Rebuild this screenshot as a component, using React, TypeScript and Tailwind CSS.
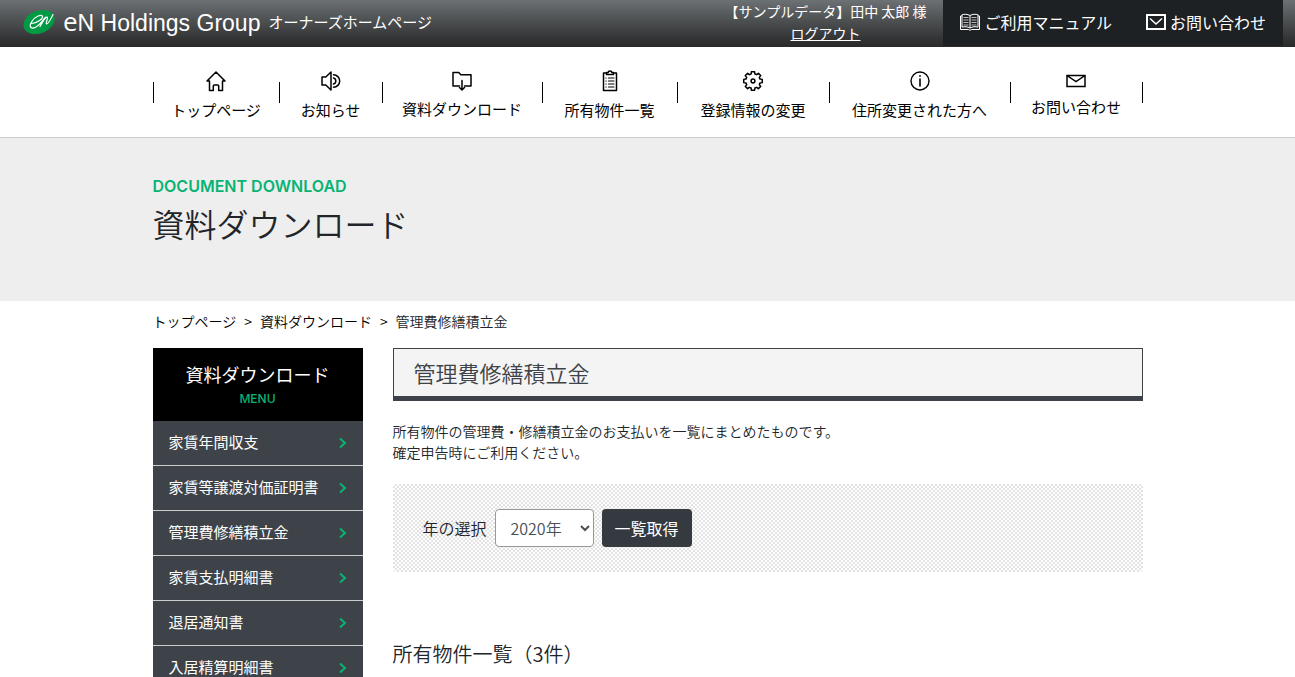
import type { ReactNode } from 'react';

type NavItem = { label: string; icon: ReactNode };

const stroke = {
  fill: 'none',
  stroke: 'currentColor',
  strokeWidth: 1.5,
  strokeLinejoin: 'round',
  strokeLinecap: 'round',
} as const;

function HomeIcon() {
  return (
    <svg width="20" height="22" viewBox="0 0 20 22" {...stroke} aria-hidden="true">
      <path d="M1 11 10 2l9 9h-2.500v9.500h-3.800V16a1 1 0 0 0-1-1H8.300a1 1 0 0 0-1 1v4.500H3.500V11z" />
    </svg>
  );
}

function SpeakerIcon() {
  return (
    <svg width="20" height="22" viewBox="0 0 20 22" {...stroke} aria-hidden="true">
      <path d="M1 7h3.800L10 2v18l-5.200-5H1z" />
      <path d="M12.500 8a3.100 3.100 0 0 1 0 6M12.500 4.800a6.200 6.200 0 0 1 0 12.400" />
    </svg>
  );
}

function FolderIcon() {
  return (
    <svg width="20" height="20" viewBox="0 0 20 20" {...stroke} aria-hidden="true">
      <path d="M7.500 15H1V1.500h5.800l2 2.200H19V15h-6.500" />
      <path d="M10 9.500v9M7.500 16.500l2.500 2.500 2.500-2.500" />
    </svg>
  );
}

function ClipboardIcon() {
  return (
    <svg width="16" height="22" viewBox="0 0 16 22" {...stroke} aria-hidden="true">
      <path d="M4.500 3H1.500v17.500h13V3h-3" />
      <path d="M4.500 4.500V2.500h1.700a1.800 1.500 0 0 1 3.600 0h1.700v2z" />
      <path d="M6.500 8h5.500M6.500 11h5.500M6.500 14h5.500M6.500 17h5.500M3.900 8h.3M3.900 11h.3M3.900 14h.3M3.900 17h.3" strokeWidth="1.200" />
    </svg>
  );
}

// eight teeth, four corners each: [degrees from tooth centre, radius]
const toothCorners = [
  [-15, 7.3],
  [-10, 9.4],
  [10, 9.4],
  [15, 7.3],
];

const gearPoints = Array.from({ length: 8 }, (_, i) =>
  toothCorners.map(([deg, r]) => {
    const a = ((i * 45 + deg) * Math.PI) / 180;
    return `${(10 + r * Math.sin(a)).toFixed(2)},${(11 - r * Math.cos(a)).toFixed(2)}`;
  }).join(' '),
).join(' ');

function GearIcon() {
  return (
    <svg width="20" height="22" viewBox="0 0 20 22" {...stroke} aria-hidden="true">
      <polygon points={gearPoints} />
      <circle cx="10" cy="11" r="1.900" />
    </svg>
  );
}

function InfoIcon() {
  return (
    <svg width="20" height="22" viewBox="0 0 20 22" {...stroke} strokeWidth="1.400" aria-hidden="true">
      <circle cx="10" cy="11" r="9" />
      <path d="M10 9v7M10 5.800v.4" strokeWidth="1.600" />
    </svg>
  );
}

function MailIcon() {
  return (
    <svg width="20" height="16" viewBox="0 0 20 16" {...stroke} strokeLinejoin="miter" aria-hidden="true">
      <path d="M1 2.500h18v11H1zM1 2.500l9 6 9-6" />
    </svg>
  );
}

function BookIcon() {
  return (
    <svg width="20" height="18" viewBox="0 0 20 18" fill="none" stroke="currentColor" strokeWidth="1" aria-hidden="true">
      <path d="M10 2.500C7.500 1 4 1 2 1.800v12.400c2.500-.8 5.500-.6 8 .8 2.500-1.400 5.500-1.600 8-.8V1.800C16 1 12.500 1 10 2.500zM10 2.500V15" />
      <path d="M2 3H.5v13.500h8l1.500.8 1.500-.8h8V3H18" />
      <path d="M3.500 4.500h5M3.500 7h5M3.500 9.500h5M3.500 12h5M11.500 4.500h5M11.500 7h5M11.500 9.500h5M11.500 12h5" strokeOpacity=".7" />
    </svg>
  );
}

function ContactIcon() {
  return (
    <svg width="20" height="16" viewBox="0 0 20 16" fill="none" stroke="currentColor" strokeWidth="2" aria-hidden="true">
      <path d="M1 1h18v14H1z" />
      <path d="M4 4.500 10 10l6-5.500" strokeWidth="1.500" />
    </svg>
  );
}

function Chevron() {
  return (
    <svg width="8" height="12" viewBox="0 0 8 12" fill="none" stroke="#08b373" strokeWidth="2" aria-hidden="true">
      <path d="M1 1.500 6 6l-5 4.500" />
    </svg>
  );
}

function Logo() {
  return (
    <svg width="32" height="26" viewBox="0 0 32 26" aria-hidden="true">
      <ellipse cx="16" cy="13" rx="16.200" ry="11.200" transform="rotate(-22 16 13)" fill="#009a44" />
      <path
        d="M8.500 14.500C14 14 20 10 19.500 7.500 19 5 12 7 8.500 13c-3 5.500 0 7.500 4.500 5 4-2 7-7.500 9.500-9.700L17 17.500C19 13 22.500 7.800 24.300 8.200c1.200.8-2.100 6-.8 6.800 1.500.6 4-4.500 6.500-9.500"
        fill="none"
        stroke="#fff"
        strokeWidth="1.200"
        strokeLinecap="round"
        strokeLinejoin="round"
      />
    </svg>
  );
}

const navItems: NavItem[] = [
  { label: 'トップページ', icon: <HomeIcon /> },
  { label: 'お知らせ', icon: <SpeakerIcon /> },
  { label: '資料ダウンロード', icon: <FolderIcon /> },
  { label: '所有物件一覧', icon: <ClipboardIcon /> },
  { label: '登録情報の変更', icon: <GearIcon /> },
  { label: '住所変更された方へ', icon: <InfoIcon /> },
  { label: 'お問い合わせ', icon: <MailIcon /> },
];

const menuItems = [
  '家賃年間収支',
  '家賃等譲渡対価証明書',
  '管理費修繕積立金',
  '家賃支払明細書',
  '退居通知書',
  '入居精算明細書',
];

function Header() {
  return (
    <header className="flex h-[47px] items-stretch justify-between border-b border-[#2a2a2a] bg-linear-to-b from-[#6c7174] to-[#2a2a2a] pr-3 pl-[23px] text-white">
      <a href="#" className="flex items-center gap-2 pb-0.5">
        <Logo />
        <span className="flex items-baseline font-['Liberation_Sans',sans-serif] text-[23px] leading-8">
          <span className="font-['Open_Sans',sans-serif] text-[26px]">e</span>
          N Holdings Group
        </span>
        <span className="text-[15px]">オーナーズホームページ</span>
      </a>
      <div className="flex">
        <div className="pr-[17px] text-center text-sm leading-[22px]">
          <p>【サンプルデータ】田中 太郎 様</p>
          <a href="#" className="underline">ログアウト</a>
        </div>
        <div className="flex items-center gap-[34px] bg-[#1d2124] px-[17px] pb-[3px]">
          <a href="#" className="flex items-center gap-1">
            <BookIcon />
            ご利用マニュアル
          </a>
          <a href="#" className="flex items-center gap-1">
            <ContactIcon />
            お問い合わせ
          </a>
        </div>
      </div>
    </header>
  );
}

function GlobalNav() {
  return (
    <nav className="border-b border-[#ccc] bg-white">
      <ul className="mx-auto grid h-[90px] max-w-[990px] grid-cols-[127fr_103fr_160fr_135fr_152fr_181fr_132fr] items-center text-black">
        {navItems.map((item, i) => (
          <li key={item.label} className="flex items-center">
            {i === 0 && <span className="h-[21px] w-px bg-black" />}
            <a href="#" className="flex flex-1 flex-col items-center gap-2 pt-1.5 text-[15px] leading-5 whitespace-nowrap">
              {item.icon}
              {item.label}
            </a>
            <span className="h-[21px] w-px bg-black" />
          </li>
        ))}
      </ul>
    </nav>
  );
}

function SideMenu() {
  return (
    <aside className="w-[210px] shrink-0 text-white">
      <div className="bg-black pt-[11px] pb-[13px] text-center">
        <h2 className="text-lg leading-[30px]">資料ダウンロード</h2>
        <p className="font-[Inter,sans-serif] text-xs leading-[19px] font-medium text-[#08b373]">MENU</p>
      </div>
      <ul>
        {menuItems.map((label) => (
          <li key={label} className="border-b border-[#ccc] bg-[#3e4349]">
            <a href="#" className="flex h-11 items-center justify-between px-4 pb-px text-[15px]">
              {label}
              <Chevron />
            </a>
          </li>
        ))}
      </ul>
    </aside>
  );
}

export default function App() {
  return (
    <div className="h-screen overflow-hidden bg-white font-['Noto_Sans_CJK_JP',sans-serif] text-[#212529]">
      <Header />
      <GlobalNav />
      <div className="bg-[#eee] pt-9 pb-[53px]">
        <div className="mx-auto max-w-[990px]">
          <p className="font-[Inter,sans-serif] leading-6 font-semibold text-[#08b373]">DOCUMENT DOWNLOAD</p>
          <h1 className="text-[32px] leading-[50px] font-[350]">資料ダウンロード</h1>
        </div>
      </div>
      <div className="mx-auto max-w-[990px]">
        <ol className="flex gap-2 pt-2.5 pb-4 text-sm leading-[21px] font-[350] text-black">
          <li><a href="#">トップページ</a></li>
          <li>&gt;</li>
          <li><a href="#">資料ダウンロード</a></li>
          <li>&gt;</li>
          <li className="text-[#212529]">管理費修繕積立金</li>
        </ol>
        <div className="flex items-start gap-[30px]">
          <SideMenu />
          <main className="flex-1 font-[350]">
            <h2 className="border border-b-[5px] border-[#3e4349] bg-[#f4f4f4] px-5 pb-px text-[22px] leading-[46px] text-[#3e4349]">
              管理費修繕積立金
            </h2>
            <p className="pt-5 text-sm leading-[21px]">
              所有物件の管理費・修繕積立金のお支払いを一覧にまとめたものです。
              <br />
              確定申告時にご利用ください。
            </p>
            <form className="mt-[21px] flex items-center gap-2 rounded-sm bg-[repeating-conic-gradient(#e2e2e2_0_25%,#fff_0_50%)] bg-size-[4px_4px] px-[30px] py-[25px]">
              <label htmlFor="year">年の選択</label>
              <select id="year" className="h-[38px] w-[99px] rounded border border-[#999] bg-white pl-[11px] text-[#495057]">
                <option>2020年</option>
              </select>
              <button type="button" className="h-[38px] rounded bg-[#343a40] px-[13px] font-normal text-white">一覧取得</button>
            </form>
            <h3 className="pt-[67px] text-xl leading-[30px]">所有物件一覧（3件）</h3>
          </main>
        </div>
      </div>
    </div>
  );
}
